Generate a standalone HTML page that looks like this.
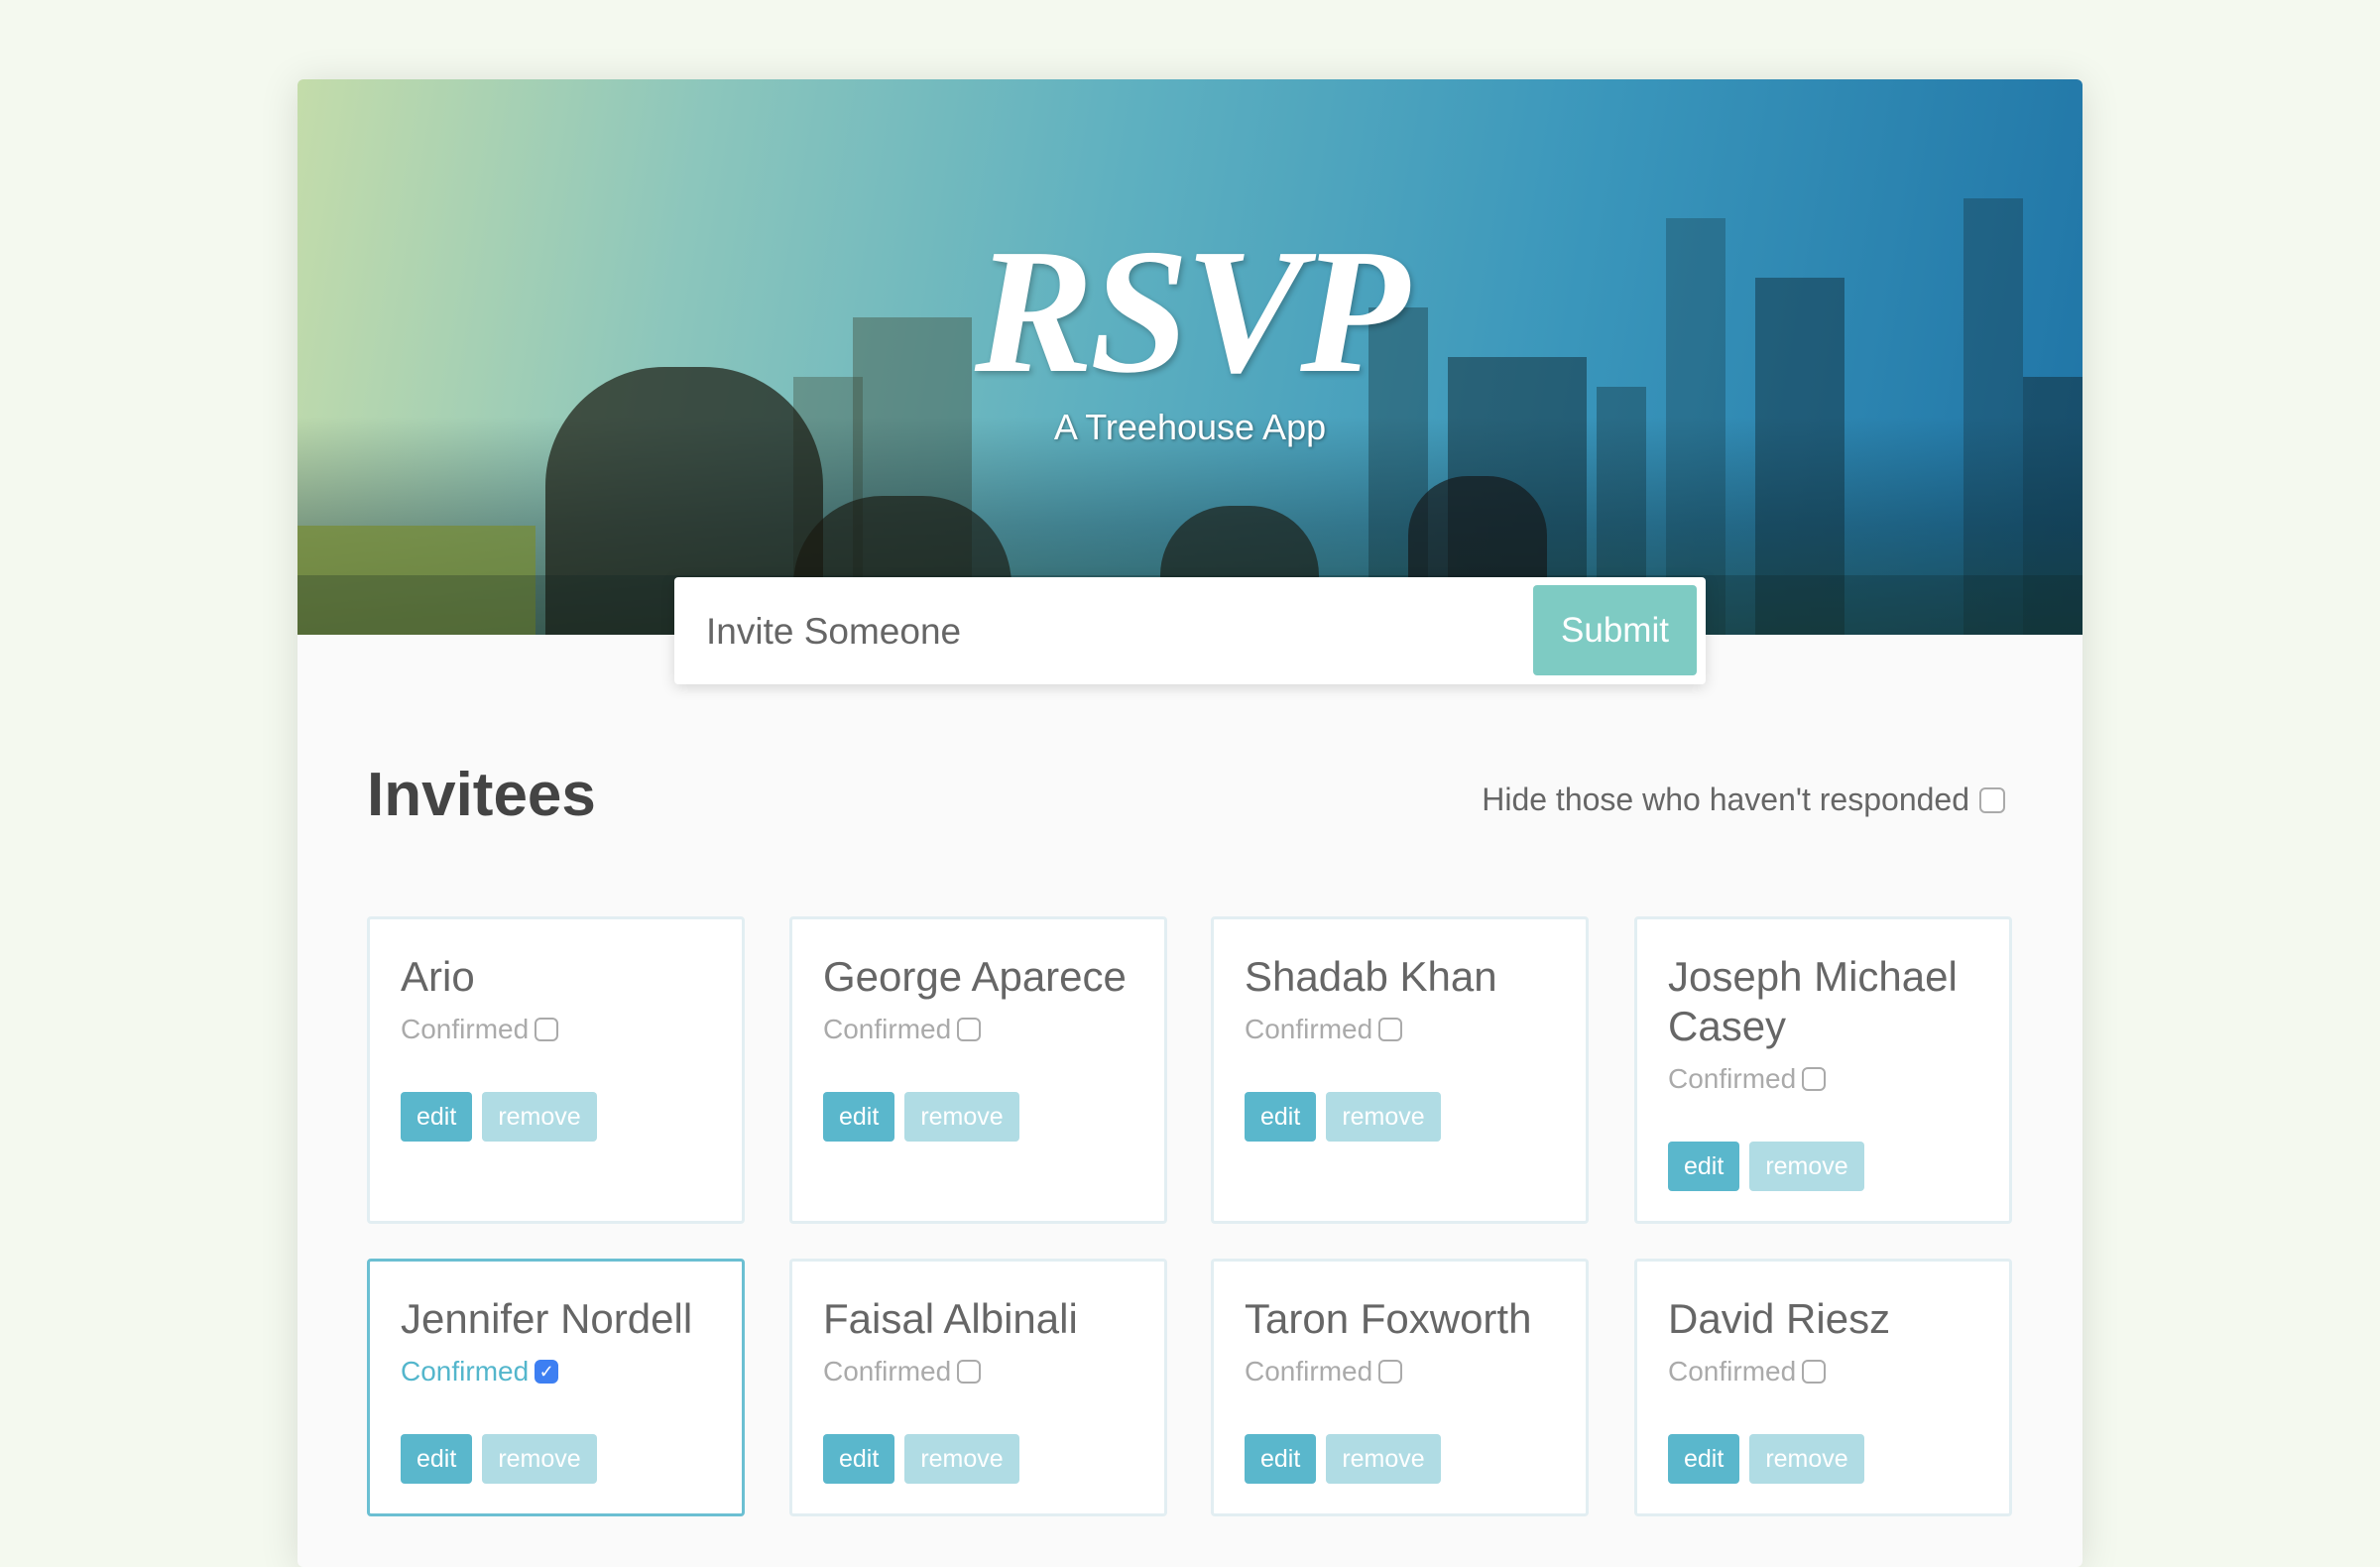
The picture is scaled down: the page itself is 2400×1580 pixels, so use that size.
<!DOCTYPE html>
<html><head><meta charset="utf-8"><style>
*{box-sizing:border-box;margin:0;padding:0}
body{width:2400px;height:1560px;background:#f4f9ef;font-family:"Liberation Sans",sans-serif;overflow:hidden;position:relative}
.wrap{position:absolute;left:300px;top:80px;width:1800px;height:1500px;background:#fafafa;border-radius:6px;box-shadow:0 4px 40px rgba(0,0,0,.12);overflow:hidden}
.hdr{position:absolute;left:0;top:0;width:1800px;height:560px;background:linear-gradient(100deg,#c4dcaa 0%,#8cc6bc 22%,#5eb0c0 45%,#3a96bb 70%,#1f74a6 100%);overflow:hidden}
.shade{position:absolute;left:0;right:0;bottom:0;height:220px;background:linear-gradient(180deg,rgba(10,40,50,0) 0%,rgba(10,40,50,.35) 50%,rgba(20,50,40,.6) 100%)}
.b{position:absolute;bottom:0;background:rgba(20,50,60,.4)}
.rsvp{position:absolute;left:0;width:1800px;top:130px;text-align:center;color:#fff;font-family:"Liberation Serif",serif;font-style:italic;font-weight:bold;font-size:180px;letter-spacing:-4px;text-shadow:2px 3px 6px rgba(0,0,0,.25)}
.sub{position:absolute;left:0;width:1800px;top:330px;text-align:center;color:#fff;font-size:36px;text-shadow:1px 1px 3px rgba(0,0,0,.4)}
.form{position:absolute;left:380px;top:502px;width:1040px;height:108px;background:#fff;border-radius:4px;box-shadow:0 3px 14px rgba(0,0,0,.15)}
.form span{position:absolute;left:32px;top:34px;font-size:37px;color:#666}
.form .btn{position:absolute;left:866px;top:8px;width:165px;height:91px;background:#7ecbc3;border-radius:4px;color:#fff;font-size:35px;text-align:center;line-height:91px}
h1{position:absolute;left:70px;top:686px;font-size:62px;color:#444;font-weight:bold}
.hide{position:absolute;right:78px;top:708px;font-size:32px;color:#666;display:flex;align-items:center}
.cb{display:inline-block;width:26px;height:26px;border:2px solid #aaa;border-radius:6px;margin-left:10px;background:#fff}
.card{position:absolute;width:381px;background:#fff;border:3px solid #e2eef2;border-radius:4px;padding:33px 31px}
.card.sel{border-color:#6bbfd2}
.n{font-size:42px;color:#666;line-height:50px}
.c{font-size:28px;color:#aaa;margin-top:10px;display:flex;align-items:center;height:36px}
.c .cb{width:24px;height:24px;margin-left:6px;border-width:2px}
.c.on{color:#53b6cc}
.c.on .cb{background:#3d7ff2;border-color:#3d7ff2;color:#fff;font-size:18px;text-align:center;line-height:20px}
.bt{margin-top:45px;display:flex;gap:10px}
.bt div{height:50px;line-height:50px;border-radius:4px;color:#fff;font-size:25px;padding:0 16px}
.e{background:#5ab7cc}.r{background:#b0dce4}
</style></head><body>
<div class="wrap">
<div class="hdr">
<div class="b" style="left:560px;width:120px;height:320px;background:rgba(60,70,50,.4)"></div>
<div class="b" style="left:500px;width:70px;height:260px;background:rgba(60,70,50,.35)"></div>
<div class="b" style="left:1080px;width:60px;height:330px"></div>
<div class="b" style="left:1160px;width:140px;height:280px;background:rgba(15,40,50,.5)"></div>
<div class="b" style="left:1310px;width:50px;height:250px"></div>
<div class="b" style="left:1380px;width:60px;height:420px;background:rgba(20,50,60,.3)"></div>
<div class="b" style="left:1470px;width:90px;height:360px;background:rgba(15,40,50,.45)"></div>
<div class="b" style="left:1680px;width:60px;height:440px;background:rgba(20,50,60,.35)"></div>
<div class="b" style="left:1740px;width:60px;height:260px;background:rgba(15,40,50,.5)"></div>
<div class="shade"></div>
<div class="b" style="left:0;width:240px;height:110px;background:rgba(120,140,50,.7)"></div>
<div class="b" style="left:250px;width:280px;height:270px;background:rgba(25,25,15,.7);border-radius:120px 120px 0 0"></div>
<div class="b" style="left:500px;width:220px;height:140px;background:rgba(25,25,15,.65);border-radius:90px 90px 0 0"></div>
<div class="b" style="left:870px;width:160px;height:130px;background:rgba(25,25,15,.65);border-radius:70px 70px 0 0"></div>
<div class="b" style="left:1120px;width:140px;height:160px;background:rgba(20,20,20,.65);border-radius:60px 60px 0 0"></div>
<div class="b" style="left:0;right:0;height:60px;background:rgba(10,30,30,.25)"></div>
<div class="rsvp">RSVP</div>
<div class="sub">A Treehouse App</div>
</div>
<div class="form"><span>Invite Someone</span><div class="btn">Submit</div></div>
<h1>Invitees</h1>
<div class="hide">Hide those who haven't responded<span class="cb"></span></div>

<div class="card" style="left:70px;top:844px;height:310px"><div class="n">Ario</div><div class="c">Confirmed<span class="cb"></span></div><div class="bt"><div class="e">edit</div><div class="r">remove</div></div></div>
<div class="card" style="left:496px;top:844px;height:310px"><div class="n">George Aparece</div><div class="c">Confirmed<span class="cb"></span></div><div class="bt"><div class="e">edit</div><div class="r">remove</div></div></div>
<div class="card" style="left:921px;top:844px;height:310px"><div class="n">Shadab Khan</div><div class="c">Confirmed<span class="cb"></span></div><div class="bt"><div class="e">edit</div><div class="r">remove</div></div></div>
<div class="card" style="left:1348px;top:844px;height:310px"><div class="n">Joseph Michael Casey</div><div class="c">Confirmed<span class="cb"></span></div><div class="bt"><div class="e">edit</div><div class="r">remove</div></div></div>

<div class="card sel" style="left:70px;top:1189px;height:260px"><div class="n">Jennifer Nordell</div><div class="c on">Confirmed<span class="cb">✓</span></div><div class="bt"><div class="e">edit</div><div class="r">remove</div></div></div>
<div class="card" style="left:496px;top:1189px;height:260px"><div class="n">Faisal Albinali</div><div class="c">Confirmed<span class="cb"></span></div><div class="bt"><div class="e">edit</div><div class="r">remove</div></div></div>
<div class="card" style="left:921px;top:1189px;height:260px"><div class="n">Taron Foxworth</div><div class="c">Confirmed<span class="cb"></span></div><div class="bt"><div class="e">edit</div><div class="r">remove</div></div></div>
<div class="card" style="left:1348px;top:1189px;height:260px"><div class="n">David Riesz</div><div class="c">Confirmed<span class="cb"></span></div><div class="bt"><div class="e">edit</div><div class="r">remove</div></div></div>
</div>
</body></html>
